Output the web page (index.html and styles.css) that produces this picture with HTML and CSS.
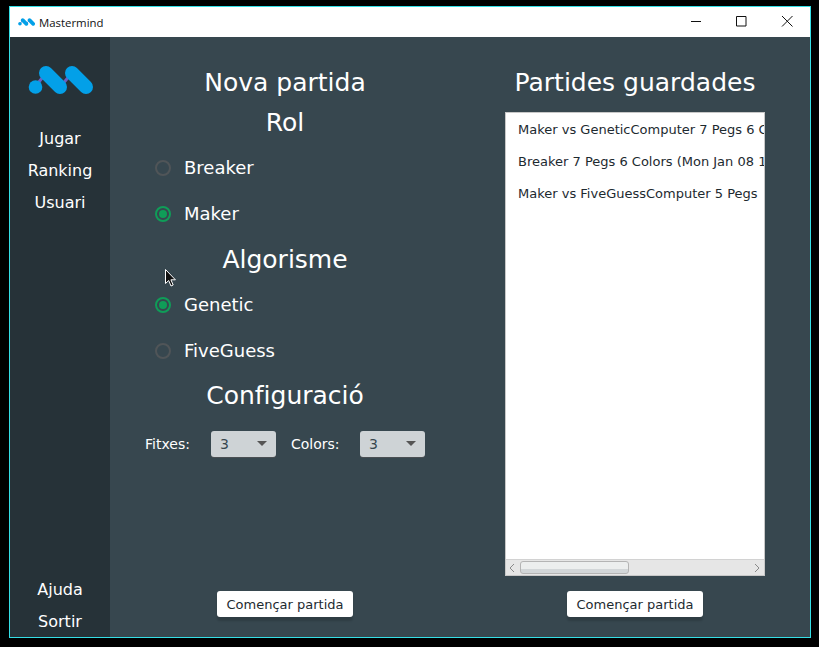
FILE: index.html
```html
<!DOCTYPE html>
<html lang="ca">
<head>
<meta charset="utf-8">
<title>Mastermind</title>
<link rel="stylesheet" href="styles.css">
</head>
<body>
<div class="window">
  <header class="titlebar">
    <svg class="app-icon" viewBox="28 66 65 28"><use href="#logo-shape"/></svg>
    <span class="app-title">Mastermind</span>
    <div class="controls">
      <svg class="ctl" viewBox="0 0 46 30"><path d="M19 14.500h10" stroke="#111" fill="none"/></svg>
      <svg class="ctl" viewBox="0 0 46 30"><path d="M18.500 9.500h9.500v9.500h-9.500z" stroke="#111" fill="none"/></svg>
      <svg class="ctl" viewBox="0 0 46 30"><path d="M18 9l10.500 10.500M28.500 9l-10.500 10.500" stroke="#111" fill="none"/></svg>
    </div>
  </header>
  <div class="content">
    <nav class="sidebar">
      <svg class="logo" width="65" height="28" viewBox="28 66 65 28">
        <g id="logo-shape">
          <path d="M35 87L46 73M60 87L72 73" stroke="#6a5fc0" stroke-width="3" fill="none"/>
          <circle cx="35.500" cy="87" r="6.800" fill="#03a0e8"/>
          <path d="M46 73L60 87M72 73L86 87" stroke="#03a0e8" stroke-width="14" stroke-linecap="round" fill="none"/>
        </g>
      </svg>
      <a class="nav-item">Jugar</a>
      <a class="nav-item">Ranking</a>
      <a class="nav-item">Usuari</a>
      <div class="nav-bottom">
        <a class="nav-item">Ajuda</a>
        <a class="nav-item">Sortir</a>
      </div>
    </nav>
    <main class="main">
      <section class="column">
        <h1 class="heading">Nova partida</h1>
        <h2 class="heading">Rol</h2>
        <div class="radios">
          <label class="radio"><span class="dot"></span>Breaker</label>
          <label class="radio"><span class="dot on"></span>Maker</label>
        </div>
        <h2 class="heading">Algorisme</h2>
        <div class="radios radios-algo">
          <label class="radio"><span class="dot on"></span>Genetic</label>
          <label class="radio"><span class="dot"></span>FiveGuess</label>
        </div>
        <h2 class="heading">Configuració</h2>
        <div class="config">
          <span class="config-label label-pegs">Fitxes:</span>
          <div class="select"><span>3</span><i class="arrow"></i></div>
          <span class="config-label label-colors">Colors:</span>
          <div class="select"><span>3</span><i class="arrow"></i></div>
        </div>
        <button class="btn">Començar partida</button>
      </section>
      <section class="column">
        <h1 class="heading">Partides guardades</h1>
        <div class="list">
          <div class="rows">
            <div class="row">Maker vs GeneticComputer 7 Pegs 6 Colors (Mon Jan 08 18:12:41)</div>
            <div class="row">Breaker 7 Pegs 6 Colors (Mon Jan 08 18:20:05 CET 2018)</div>
            <div class="row">Maker vs FiveGuessComputer 5 Pegs</div>
          </div>
          <div class="hscroll">
            <svg class="sb-arrow" viewBox="0 0 6 10"><path d="M5 1L1 5l4 4" stroke="#8a8a8a" fill="none"/></svg>
            <div class="track"><div class="thumb"></div></div>
            <svg class="sb-arrow" viewBox="0 0 6 10"><path d="M1 1l4 4-4 4" stroke="#8a8a8a" fill="none"/></svg>
          </div>
        </div>
        <button class="btn">Començar partida</button>
      </section>
    </main>
  </div>
  <svg class="cursor" width="12" height="18" viewBox="0 0 12 18"><path d="M.5.500v14l3.200-3 2.300 5.500 2.200-1-2.300-5.200h4.500z" fill="#111" stroke="#fff"/></svg>
</div>
</body>
</html>
```
FILE: styles.css
```css
* { box-sizing: border-box; }
html, body { margin: 0; height: 100%; background: #000; overflow: hidden; }
body { padding: 6px 0 0 9px; font-family: "DejaVu Sans", sans-serif; color: #fff; }
.window {
  position: relative;
  width: 802px;
  height: 632px;
  border: 1px solid #35dfe6;
  display: flex;
  flex-direction: column;
}
.titlebar {
  height: 30px;
  background: #fff;
  color: #111;
  display: flex;
  align-items: center;
  padding-left: 8px;
  flex: none;
}
.app-icon { width: 17px; height: 8px; margin-top: -1px; }
.app-title { font: 11.4px "Open Sans", "Noto Sans", sans-serif; margin-left: 4px; }
.controls { margin-left: auto; display: flex; }
.ctl { width: 46px; height: 30px; display: block; }
.content { flex: 1; display: flex; min-height: 0; background: #37474f; }
.sidebar {
  width: 100px;
  background: #263238;
  display: flex;
  flex-direction: column;
  align-items: center;
  padding-top: 29px;
  flex: none;
}
.logo { display: block; margin-bottom: 28px; flex: none; }
.nav-item { display: block; height: 32px; line-height: 34px; font-size: 16px; text-align: center; }
.nav-bottom { margin-top: auto; }
.main { flex: 1; display: grid; grid-template-columns: 1fr 1fr; }
.column {
  display: flex;
  flex-direction: column;
  align-items: center;
  padding: 26px 0 20px;
  min-width: 0;
}
.heading {
  font-size: 25px;
  font-weight: 400;
  line-height: 40px;
  height: 40px;
  margin: 0;
  text-align: center;
  white-space: nowrap;
}
.radios { align-self: stretch; padding-left: 45px; margin: 2px 0 3px; }
.radios-algo { margin-bottom: 2px; }
.radio { display: flex; align-items: center; height: 46px; padding-bottom: 2px; font-size: 18px; }
.dot {
  width: 16px;
  height: 16px;
  border-radius: 50%;
  border: 2px solid #505558;
  margin: 2px 13px 0 0;
  flex: none;
  display: flex;
  align-items: center;
  justify-content: center;
}
.dot.on { border-color: #0f9d58; }
.dot.on::after { content: ""; width: 8px; height: 8px; border-radius: 50%; background: #0f9d58; }
.config {
  align-self: stretch;
  display: flex;
  align-items: center;
  height: 27px;
  margin-top: 14px;
  padding-left: 35px;
  font-size: 14px;
}
.config-label { flex: none; }
.label-pegs { width: 66px; }
.label-colors { width: 69px; margin-left: 15px; }
.select {
  width: 65px;
  height: 26px;
  background: #ced3d6;
  border-radius: 3px;
  box-shadow: 0 1px 0 #4a4f53;
  color: #37474f;
  display: flex;
  align-items: center;
  justify-content: space-between;
  padding: 0 9px;
  font-size: 14px;
}
.arrow { width: 0; height: 0; border: 5px solid transparent; border-top: 5px solid #555; border-bottom: 0; }
.btn {
  margin-top: auto;
  height: 26px;
  width: 136px;
  padding: 0;
  border: 0;
  border-radius: 3px;
  background: #fff;
  color: #1d2a30;
  font: 13px "DejaVu Sans", sans-serif;
  box-shadow: 0 4px 2px rgba(0, 0, 0, .15);
}
.list {
  width: 260px;
  height: 464px;
  margin-top: 9px;
  background: #fff;
  border: 1px solid #c8c8c8;
  display: flex;
  flex-direction: column;
  color: #1d2a30;
  font-size: 13px;
  overflow: hidden;
}
.rows { flex: 1; overflow: hidden; padding-top: 1px; }
.row { height: 32px; line-height: 32px; padding-left: 12px; white-space: nowrap; }
.hscroll {
  height: 16px;
  background: #e6e6e6;
  border-top: 1px solid #d2d2d2;
  display: flex;
  align-items: center;
  padding: 0 4px 0 3px;
  flex: none;
}
.sb-arrow { width: 6px; height: 10px; flex: none; }
.track { flex: 1; height: 14px; padding: 0 5px; }
.thumb {
  width: 109px;
  height: 13px;
  background: linear-gradient(#eceeee 0 60%, #d2d6d8 60%);
  border: 1px solid #b4b4b4;
  border-radius: 3px;
}
.cursor { position: absolute; left: 155px; top: 262px; }
```
